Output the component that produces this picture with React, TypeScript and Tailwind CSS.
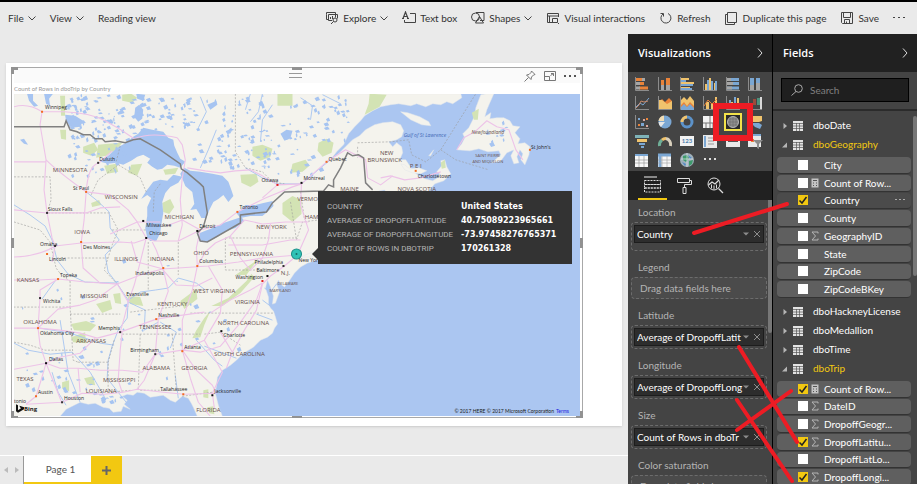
import { useState } from "react";
import type { ReactNode } from "react";

//#region types
type Field = { name: string; icon?: "calc" | "sum"; checked?: boolean; hovered?: boolean };
type Table = { name: string; open?: boolean; fields?: Field[] };
type Well = { label: string; value?: string; tall?: boolean };
type Label = [number, number, string];
//#endregion

//#region constants
const TABLES: Table[] = [
  { name: "dboDate" },
  {
    name: "dboGeography",
    open: true,
    fields: [
      { name: "City" },
      { name: "Count of Row...", icon: "calc" },
      { name: "Country", checked: true, hovered: true },
      { name: "County" },
      { name: "GeographyID", icon: "sum" },
      { name: "State" },
      { name: "ZipCode" },
      { name: "ZipCodeBKey" },
    ],
  },
  { name: "dboHackneyLicense" },
  { name: "dboMedallion" },
  { name: "dboTime" },
  {
    name: "dboTrip",
    open: true,
    fields: [
      { name: "Count of Row...", icon: "calc", checked: true },
      { name: "DateID", icon: "sum" },
      { name: "DropoffGeogr...", icon: "sum" },
      { name: "DropoffLatitu...", icon: "sum", checked: true },
      { name: "DropoffLatLo..." },
      { name: "DropoffLongi...", icon: "sum", checked: true },
    ],
  },
];

const WELLS: Well[] = [
  { label: "Location", value: "Country", tall: true },
  { label: "Legend" },
  { label: "Latitude", value: "Average of DropoffLatit" },
  { label: "Longitude", value: "Average of DropoffLong" },
  { label: "Size", value: "Count of Rows in dboTr" },
  { label: "Color saturation" },
];

const TOOLTIP = [
  ["COUNTRY", "United States"],
  ["AVERAGE OF DROPOFFLATITUDE", "40.75089223965661"],
  ["AVERAGE OF DROPOFFLONGITUDE", "-73.97458276765371"],
  ["COUNT OF ROWS IN DBOTRIP", "170261328"],
];
//#endregion

//#region map data
const LAND = [
  // mainland
  "M14 94 H460 L461 98 452 104 446 102 440 105 432 104 425 107 416 104 410 106 398 104 390 105 380 107 372 111 364 116 360 121 354 127 348 134 343 145 336 152 330 160 338 154 345 147 352 140 359 136 365 130 374 125 382 123 392 122 400 125 403 131 401 137 396 140 388 142 392 147 396 143 401 147 402 153 399 160 405 160 409 166 412 171 418 176 424 179 432 181 437 178 439 174 436 172 441 166 440 161 444 160 446 167 450 174 443 181 434 184 428 191 420 198 404 216 397 214 399 200 389 198 384 190 372 192 365 205 350 212 340 222 332 232 335 243 322 254 317 260 307 263 300 267 294 273 290 279 284 287 280 284 278 280 276 284 279 292 275 303 272 304 273 296 270 287 267 280 265 288 268 297 268 304 270 308 273 311 275 317 277 324 274 328 272 333 267 337 260 340 253 347 243 353 236 360 230 365 222 370 217 377 216 386 215 393 218 405 222 416 H197 L193 407 191 403 188 398 182 396 175 402 170 400 163 395 150 397 144 393 137 392 133 395 127 394 122 396 127 400 124 404 130 409 123 406 121 411 113 412 109 408 103 407 95 403 88 404 80 402 72 406 66 409 60 416 H14 Z",
  // Newfoundland
  "M480 95 L486 94 493 94 489 103 486 110 484 117 490 113 489 119 496 118 503 118 509 121 512 126 519 127 514 133 519 139 517 144 524 143 529 147 528 155 524 165 520 160 522 154 519 150 516 157 518 163 513 164 510 156 513 150 506 153 500 161 491 163 500 155 498 151 487 152 478 149 469 151 456 150 461 144 464 138 462 134 468 128 474 116 475 108 Z",
  // Anticosti, PEI
  "M400 112 L407 113 419 117 428 122 430 126 421 125 410 120 Z",
  "M400 164 L404 165 409 169 418 168 426 171 420 174 412 173 404 170 Z",
  "M428 156 L433 150 430 156 Z",
  // Long Island
  "M300 257 L312 252 318 252 310 257 Z",
];

const LAKES = [
  "M100 162 L108 156 117 148 126 143 133 137 138 134 143 128 152 130 163 132 168 138 173 140 174 146 177 153 180 159 185 162 180 168 174 166 167 165 162 169 157 170 152 167 147 163 150 159 143 155 137 157 131 161 123 165 116 163 108 164 Z",
  "M153 182 L160 180 167 181 173 175 182 177 178 183 170 187 165 193 162 202 163 213 161 225 160 233 156 241 150 241 147 238 145 228 147 216 147 207 151 198 147 195 141 199 146 191 Z",
  "M180 174 L184 168 190 171 200 172 212 174 222 176 228 182 231 190 233 196 228 202 223 195 218 199 213 202 209 210 206 218 201 218 199 214 196 209 190 210 194 204 192 192 185 186 Z",
  "M197 234 L207 230 215 227 223 223 232 220 241 217 244 221 235 228 226 231 217 237 207 242 199 241 Z",
  "M236 213 L241 209 245 205 255 205 263 203 272 201 273 206 268 211 262 216 250 216 240 218 Z",
  "M65 115 L75 116 83 121 80 127 72 128 66 122 Z",
  "M27 94 L33 94 33 101 38 106 34 107 29 101 Z",
  "M44 94 L53 94 49 99 50 106 46 104 Z",
  "M135 108 L139 105 143 110 142 119 138 122 134 117 Z",
  "M136 94 L145 95 143 101 137 99 Z",
  "M20 140 L24 139 28 145 24 144 Z",
  "M280 134 L286 130 292 131 290 138 284 141 Z",
  "M207 105 L216 101 217 105 210 110 Z",
];

const PARKS = [
  "M60 96 H65 V116 H61 Z",
  "M277 94 H292 V106 H277 Z",
  "M369 94 L386 95 379 107 364 115 368 104 Z",
  "M252 147 L262 145 272 149 270 157 260 161 252 156 Z",
  "M318 143 L326 139 333 143 331 153 322 157 317 151 Z",
  "M292 164 L305 160 309 166 302 172 290 173 Z",
  "M240 175 L256 174 258 182 250 187 241 183 Z",
  "M282 203 L292 196 301 200 301 214 292 222 282 214 Z",
  "M60 130 L66 130 66 140 61 139 Z",
  "M98 145 L108 144 122 143 117 149 106 156 96 158 Z",
  "M83 147 L94 143 98 150 91 156 83 153 Z",
  "M131 165 L142 164 137 176 128 173 Z",
  "M104 166 L116 164 118 172 107 174 Z",
  "M163 170 L178 168 175 174 165 175 Z",
  "M162 203 L170 199 174 207 169 214 163 212 Z",
  "M91 203 L99 200 101 205 92 207 Z",
  "M122 95 L131 94 137 98 132 103 122 101 Z",
  "M71 324 L86 321 96 325 90 331 74 330 Z",
  "M71 337 L85 332 86 343 73 342 Z",
  "M96 304 L110 300 112 309 102 313 Z",
  "M113 294 L120 293 121 304 115 303 Z",
  "M127 296 L140 297 143 306 130 304 Z",
  "M180 301 L196 289 197 299 184 309 Z",
  "M196 330 L204 318 210 311 204 325 200 337 192 338 Z",
  "M211 306 L228 298 246 281 251 274 254 277 240 293 222 306 Z",
  "M235 275 L254 262 260 256 246 275 Z",
  "M203 390 L208 389 208 398 203 397 Z",
  "M62 382 L69 380 69 391 62 388 Z",
  "M84 378 L93 376 95 385 87 384 Z",
  "M471 113 L478 109 477 120 473 120 Z",
  "M440 163 L444 160 445 168 441 169 Z",
  "M207 407 L213 406 214 414 209 413 Z",
];

const ROADS = [
  "M14 107 Q28 103 42 112 H64 Q90 113 105 121 T134 139 Q150 132 177 138",
  "M42 112 L40 125 46 160 44 190 47 213 52 238 55 246 52 262",
  "M46 160 Q58 172 86 192 L110 195 128 210 137 222 146 238 154 241 178 241 200 230",
  "M14 162 H46",
  "M14 210 L47 213 H86 L100 208 120 207",
  "M86 192 L84 220 81 243 83 268 100 283 117 284",
  "M86 192 Q88 165 99 163 L112 151",
  "M14 257 Q40 256 55 246 L81 243 120 242 134 243 146 239",
  "M14 280 L39 280 58 279 85 282 117 284 140 275 162 269 178 268 208 266 238 262 262 258 297 255",
  "M40 297 L38 328 40 345 46 363 41 380 36 396 26 404",
  "M58 279 L40 290 40 297",
  "M14 328 L38 328 60 330 80 333 97 338 120 332 156 319 175 316 204 312",
  "M38 328 L58 309 80 305 95 300 117 284",
  "M46 363 L60 368 78 368 100 370 122 370 142 372 155 354 182 350",
  "M14 369 L46 363 56 388 62 403",
  "M26 404 L62 402 82 393 104 394 123 392 137 389 163 392 184 394 216 393",
  "M46 363 L60 357 80 353 95 338",
  "M78 368 L80 392",
  "M122 332 L120 350 118 380 122 392",
  "M117 284 L128 302 124 318 120 332",
  "M146 238 L140 262 134 285 128 302",
  "M163 269 L156 250 152 242",
  "M163 269 L168 291 158 319 155 354 144 380 137 389",
  "M162 269 L176 285 196 286 212 278",
  "M197 266 L192 290 182 320 182 350 190 378 198 402 210 416",
  "M178 241 L182 225 180 200 182 178 185 160 182 145 177 138",
  "M208 266 L222 290 220 313 204 340 182 350",
  "M182 350 L200 352 220 346 238 325 256 300 262 283",
  "M204 340 L222 372 212 393 214 408",
  "M220 332 L232 352 226 368",
  "M182 350 L196 370 212 385 216 393",
  "M200 230 L220 225 237 212 265 198 292 187 301 184 326 162 345 150 365 160 367 178 380 185 392 176",
  "M277 185 L301 184 M277 185 L262 176 250 170 235 171 220 173 205 171 187 168",
  "M277 185 L262 198 M301 184 L300 205 308 230 297 255",
  "M244 220 L262 224 285 222 308 222",
  "M244 220 L230 236 215 243 205 252 197 266",
  "M262 258 L268 240 270 224 M262 258 L250 270 240 258 230 236",
  "M262 283 L250 290 230 300 210 313",
  "M297 255 L284 266 270 276 262 284 256 310 244 330 232 352",
  "M200 230 L182 220 166 226 M200 230 L196 248 197 266",
  "M228 245 H262 L290 240 300 240",
  "M456 150 L463 138 474 132 486 121 496 127 508 130 515 150 522 160",
  "M380 178 L390 176 404 180 420 178 440 172",
  "M137 222 L110 234 M137 222 H160 M131 241 L137 262 163 269",
];

const STATE_LINES = [
  "M235 94 V152 L245 168 262 172 272 182 284 184",
  "M14 177 H50 L51 200 47 213 H109",
  "M91 195 L98 180 118 165 140 178 146 192",
  "M14 222 L40 230 50 242 56 268 62 276 70 281",
  "M110 215 L118 230 112 245 104 270 118 285",
  "M57 258 H108 M70 281 V307 H14 M70 307 L73 360 78 362 M70 314 H120",
  "M14 342 L30 345 45 350 72 350",
  "M78 362 H108 V392 L132 390",
  "M122 334 H200 M130 312 L180 306",
  "M114 340 L108 362 M140 334 L138 390 M172 334 L176 390 M140 390 H172",
  "M148 242 V290 M178 242 V275 M112 230 H147",
  "M190 313 H274 M204 334 L220 332 240 345",
  "M225 238 H296 M225 238 V270 H262 M182 396 L212 392",
  "M290 202 L296 240 302 222 318 220 M300 192 L304 220",
  "M357 147 V158 M357 143 L390 142 408 140 411 155 425 162 440 150 475 94",
  "M440 150 L455 160 488 170",
  "M160 184 L154 192 153 212 M120 146 L116 162",
];

const RIVERS = [
  "M86 192 L96 200 109 212 110 228 119 240 105 255 108 272 118 285 128 300 127 318 118 330 112 346 108 360 107 378 118 392 126 402",
  "M14 205 L30 215 45 226 52 240 57 260 68 274 85 282 117 283",
  "M128 300 L140 292 155 290 168 288 178 278 196 283 205 290",
  "M14 343 L28 350 50 354 72 352 90 372 104 396",
  "M42 299 L55 281 M40 328 L70 333 100 343 114 345",
  "M128 302 L145 310 144 330 158 322",
  "M245 168 L262 178 277 184 301 184 320 168 330 160",
  "M250 94 L245 110 M262 94 L258 112 250 122 M272 105 L262 120 260 142",
  "M300 98 L312 106 310 120 M322 95 L340 104",
  "M200 97 L206 112 198 128 M216 130 L208 150 200 168",
  "M60 320 L68 372 80 402 M52 372 L58 392 66 405",
  "M160 322 L176 332 170 348 M175 375 L178 398",
  "M276 284 L270 292 264 288 M262 300 L270 306 M256 314 L272 320",
  "M196 340 L214 360 222 366 M204 346 L236 358",
];

const STATES: Label[] = [
  [70, 172, "MINNESOTA"], [121, 199, "WISCONSIN"], [179, 219, "MICHIGAN"], [82, 234, "IOWA"],
  [126, 261, "ILLINOIS"], [162, 261, "INDIANA"], [201, 255, "OHIO"], [28, 282, "KANSAS"],
  [94, 298, "MISSOURI"], [172, 306, "KENTUCKY"], [40, 324, "OKLAHOMA"], [155, 329, "TENNESSEE"],
  [91, 343, "ARKANSAS"], [25, 381, "TEXAS"], [119, 382, "MISSISSIPPI"], [156, 370, "ALABAMA"],
  [194, 370, "GEORGIA"], [101, 393, "LOUISIANA"], [214, 293, "WEST VIRGINIA"], [247, 304, "VIRGINIA"],
  [243, 325, "NORTH CAROLINA"], [239, 356, "SOUTH CAROLINA"], [208, 412, "FLORIDA"],
  [251, 256, "PENNSYLVANIA"], [271, 229, "NEW YORK"], [307, 201, "VERMO"], [311, 219, "HAM"],
  [349, 191, "MAINE"], [386, 155, "NEW"], [384, 162, "BRUNSWICK"], [415, 168, "P E I"],
  [416, 191, "NOVA SCOTIA"], [285, 275, "N.J."],
];

const CITIES: Label[] = [
  [45, 109, "Winnipeg"], [99, 161, "Duluth"], [73, 190, "St Paul"], [48, 211, "Sioux Falls"],
  [146, 227, "Milwaukee"], [149, 235, "Chicago"], [40, 246, "Omaha"], [83, 249, "Des Moines"],
  [49, 261, "Lincoln"], [60, 277, "Topeka"], [43, 303, "Wichita"], [135, 275, "Indianapolis"],
  [126, 296, "Evansville"], [158, 317, "Nashville"], [98, 330, "Memphis"], [40, 335, "Oklahoma City"],
  [49, 361, "Dallas"], [130, 352, "Birmingham"], [184, 349, "Atlanta"], [38, 394, "Austin"],
  [64, 400, "Houston"], [14, 403, "tonio"], [160, 391, "Tallahassee"], [214, 393, "Jacksonville"],
  [223, 337, "Charlotte"], [235, 279, "Washington"], [256, 272, "Baltimore"], [254, 264, "Philadelphia"],
  [199, 263, "Columbus"], [199, 228, "Detroit"], [239, 209, "Toronto"], [261, 182, "Ottawa"],
  [303, 180, "Montreal"], [328, 161, "Quebec"], [417, 178, "Charlottetown"], [530, 149, "St John's"],
  [298, 262, "New Yor"],
];

const DOTS: [number, number, string][] = [
  [42, 112, "#f26b21"], [98, 163, "#333"], [86, 192, "#f26b21"], [47, 213, "#333"], [143, 221, "#111"],
  [146, 238, "#111"], [81, 242, "#f26b21"], [47, 254, "#f26b21"], [55, 246, "#333"], [58, 279, "#f26b21"],
  [40, 298, "#333"], [163, 268, "#f26b21"], [156, 319, "#f26b21"], [120, 332, "#333"], [38, 328, "#f26b21"],
  [46, 363, "#111"], [155, 354, "#333"], [182, 351, "#f26b21"], [36, 396, "#f26b21"], [62, 402, "#333"],
  [183, 394, "#f26b21"], [212, 395, "#111"], [221, 331, "#111"], [262, 281, "#e01b1b"], [267, 276, "#111"],
  [283, 266, "#333"], [197, 266, "#f26b21"], [197, 231, "#111"], [237, 212, "#f26b21"], [277, 185, "#e01b1b"],
  [301, 183, "#111"], [326, 162, "#f26b21"], [415, 171, "#f26b21"], [529, 150, "#f26b21"],
];

// [x, y, width, height, count] of zones that are dotted with small lakes
const LAKE_ZONES = [
  [66, 95, 66, 45, 90], [134, 96, 60, 34, 50], [195, 96, 70, 66, 50], [240, 96, 110, 45, 60],
  [250, 145, 70, 36, 26], [60, 142, 70, 34, 30], [188, 150, 50, 18, 14], [18, 260, 180, 130, 30],
  [20, 350, 80, 45, 26], [180, 300, 60, 60, 8], [470, 122, 36, 24, 10], [95, 394, 28, 8, 10],
];

function scatter() {
  let seed = 17;
  const next = () => {
    seed = (seed * 16807) % 2147483647;
    return seed / 2147483647;
  };
  return LAKE_ZONES.flatMap(([x, y, w, h, n]) =>
    Array.from({ length: n }, () => {
      const cx = x + next() * w;
      const cy = y + next() * h;
      const a = 1 + next() * 3;
      const b = 1 + next() * 3;
      return `M${cx.toFixed(1)} ${cy.toFixed(1)} l${a.toFixed(1)} ${(-b / 2).toFixed(1)} ${(a / 2).toFixed(1)} ${b.toFixed(1)} ${(-a).toFixed(1)} ${(b / 3).toFixed(1)}z`;
    })
  ).join(" ");
}
const SMALL_LAKES = scatter();
//#endregion

//#region icons
function Chevron() {
  return (
    <svg className="w-2 h-2 shrink-0" viewBox="0 0 8 8" fill="none" stroke="#444">
      <path d="M0.500 2.500 L4 6 L7.500 2.500" />
    </svg>
  );
}

function ToolIcon({ children }: { children: ReactNode }) {
  return (
    <svg className="w-[14px] h-[14px] shrink-0" viewBox="0 0 14 14" fill="none" stroke="#444">
      {children}
    </svg>
  );
}

const O = "#e8833a";
const Y = "#f0c36d";
const B = "#7ba7d3";
const G = "#a6a6a6";
const AXIS = <path d="M0.500 0 V13.500 H14" stroke="#8c8c8c" fill="none" />;

const VISUALS: { name: string; art: ReactNode }[] = [
  { name: "Stacked bar chart", art: <>{AXIS}<path d="M1 1h6v3H1zM1 5h8v3H1zM4 9.500h9v3H4z" fill={O} /><path d="M7 1h3v3H7zM1 5h4v3H1zM1 9.500h4v3H1z" fill={G} /></> },
  { name: "Stacked column chart", art: <>{AXIS}<path d="M3 3h3v10H3zM8 1h4v7H8z" fill={O} /><path d="M3 8h3v5H3zM8 8h4v5H8z" fill={G} /></> },
  { name: "Clustered bar chart", art: <>{AXIS}<path d="M1 1h8v2H1zM1 5h13v2H1zM1 10h9v1H1z" fill={Y} /><path d="M1 3h5v2H1zM1 7h12v2H1zM1 11h11v2H1z" fill={B} /></> },
  { name: "Clustered column chart", art: <>{AXIS}<path d="M2 7h2v6H2zM6 1h2v12H6zM11 6h1v7h-1z" fill={Y} /><path d="M4 3h2v10H4zM8 4h2v9H8zM12 4h2v9h-2z" fill={B} /></> },
  { name: "100% stacked bar chart", art: <>{AXIS}<path d="M1 1h12v3H1zM1 5h12v3H1zM1 9.500h12v3H1z" fill={B} /><path d="M1 1h4v3H1zM1 5h6v3H1zM1 9.500h5v3H1z" fill={G} /></> },
  { name: "100% stacked column chart", art: <>{AXIS}<path d="M2 1h4v12H2zM8 1h4v12H8z" fill={B} /><path d="M2 8h4v5H2zM8 6h4v7H8z" fill={G} /></> },
  { name: "Line chart", art: <>{AXIS}<path d="M1 11 L5 7 8 9 14 2" stroke={B} fill="none" /><path d="M1 12 L4 9 6 5 9 6 13 5" stroke="#c98a6a" fill="none" /></> },
  { name: "Area chart", art: <>{AXIS}<path d="M1 6 L4 3 7 6 11 2 14 5 V13 H1z" fill={O} /><path d="M1 4 L4 4 9 8 14 5 V13 H1z" fill={Y} /></> },
  { name: "Stacked area chart", art: <>{AXIS}<path d="M1 4 L4 1 7 4 10 0 14 5 V13 H1z" fill={Y} /><path d="M1 9 L4 6 7 10 10 6 14 10 V13 H1z" fill={O} /><path d="M1 11 L4 8 7 11 10 8 14 12 V14 H1z" fill={B} /></> },
  { name: "Line and stacked column chart", art: <>{AXIS}<path d="M3 6h3v7H3zM8 8h2v5H8zM12 1h2v12h-2z" fill={Y} /><path d="M1 10 L5 4 9 8 14 3" stroke={O} fill="none" /></> },
  { name: "Line and clustered column chart", art: <>{AXIS}<path d="M3 4h2v9H3zM8 1h2v12H8z" fill={B} /><path d="M5 6h2v7H5zM11 2h2v11h-2z" fill={Y} /></> },
  { name: "Waterfall chart", art: <>{AXIS}<path d="M3 8h2v5H3zM12 1h2v12h-2z" fill="#d9d9d9" /><path d="M5 3h3v6H5z" fill="#9b4a3c" /><path d="M9 2h3v7H9z" fill="#4d8f7a" /></> },
  { name: "Scatter chart", art: <>{AXIS}<path d="M3 9h2v2H3zM11 3h2v2h-2z" fill={O} /><path d="M6 8h3v3H6zM3 3h2v2H3z" fill={B} /><path d="M8 4h2v2H8zM11 10h2v2h-2z" fill="#d9a79c" /></> },
  { name: "Pie chart", art: <><circle cx="7" cy="7" r="6.500" fill={B} /><path d="M6 6 V0.500 A6.500 6.500 0 0 0 0.500 6z" fill="#f0dcb4" /><path d="M7 7 H0.500 A6.500 6.500 0 0 0 3 12z" fill="#e6e6e6" /></> },
  { name: "Donut chart", art: <><circle cx="7" cy="7" r="5" fill="none" stroke="#5c92c9" strokeWidth="3" /><path d="M7 2 A5 5 0 0 0 2 7" fill="none" stroke={Y} strokeWidth="3" /></> },
  { name: "Treemap", art: <><path d="M0 1h14v12H0z" fill="#f2f2f2" /><path d="M7 1v12M0 8h14M10 8v5M3 8v5" stroke="#777" /></> },
  { name: "Map", art: <><path d="M-1 -1h16v16H-1z" fill="#2a2a2a" stroke="#f2e24a" strokeWidth="2" /><circle cx="7" cy="7" r="5.500" fill="#8e8e8e" stroke="#b5b5b5" /><path d="M7 2v10M2 7h10M3 4h8M3 10h8M4 3v8M10 3v8" stroke="#666" strokeWidth="0.500" /></> },
  { name: "Filled map", art: <><path d="M4 1h10v5l-3 1H5L3 4z" fill={Y} /><path d="M0 3h4l1 3H1zM3 8h8l3 2-2 4-5-2z" fill={B} /><path d="M1 8h4" stroke="#e6e6e6" /></> },
  { name: "Funnel", art: <><path d="M0 1h14v3H0z" fill="#7fb3b8" /><path d="M2 5h10v3H2z" fill={Y} /><path d="M4 9h6v2H4z" fill={B} /><path d="M6 12h3v2H6z" fill={B} /></> },
  { name: "Gauge", art: <><path d="M1.500 12 A5.500 6 0 0 1 4 6" fill="none" stroke="#6fae97" strokeWidth="3" /><path d="M4 6 A5.500 5.500 0 0 1 8 4.500" fill="none" stroke={Y} strokeWidth="3" /><path d="M8 4.500 A5.500 6 0 0 1 12.500 12" fill="none" stroke="#d9d0bd" strokeWidth="3" /></> },
  { name: "Card", art: <><path d="M0 2h14v10H0z" fill="#f2f2f2" /><text x="7" y="9" textAnchor="middle" fontSize="6" fontWeight="700" fill="#4f7fae">123</text></> },
  { name: "Multi-row card", art: <><path d="M0 1h14v13H0z" fill="#e9e9e9" /><path d="M2 2v11" stroke={B} strokeWidth="2" /><path d="M5 4h8M5 7h6M5 10h6" stroke="#999" /></> },
  { name: "KPI", art: <><path d="M0 1h14v12H0z" fill="#e9e9e9" /><path d="M2 7h10" stroke="#555" strokeWidth="2" /></> },
  { name: "Slicer", art: <><path d="M0 0h13v13H0z" fill="#e9e9e9" /><path d="M0 1h13" stroke={B} strokeWidth="2" /><path d="M3 5h3v3H3z" fill={O} /><path d="M5 6h10l-4 4v5l-2-1v-4z" fill="#8c8c8c" /></> },
  { name: "Table", art: <><path d="M0 1h13v13H0z" fill="#f7f7f7" /><path d="M0 2h13" stroke={B} strokeWidth="2" /><path d="M4 3v11M9 3v11M0 7h13M0 10h13" stroke="#999" strokeWidth="0.700" /></> },
  { name: "Matrix", art: <><path d="M0 1h13v13H0z" fill="#f7f7f7" /><path d="M0 2h13M2 3v11" stroke={B} strokeWidth="3" /><path d="M4 3v11M9 3v11M0 7h13M0 10h13" stroke="#aaa" strokeWidth="0.700" /></> },
  { name: "ArcGIS map", art: <><circle cx="7" cy="7" r="7" fill="#9fb0ba" /><path d="M3 3l4-1 2 3-3 4-3-2zM9 8l4-1-1 4-3 2z" fill="#3f9b6c" /><path d="M8 2l4 3-2 1zM2 9l4 2-1 2z" fill="#4f88c7" /><path d="M1 6h12M7 0v14" stroke="#dfe6ea" strokeWidth="0.700" /></> },
  { name: "More visuals", art: <path d="M1 5h2v2H1zM6 5h2v2H6zM11 5h2v2h-2z" fill="#ddd" /> },
];

function GridIcon() {
  return (
    <svg className="w-[10px] h-[10px] shrink-0" viewBox="0 0 10 10">
      <path d="M0 0h10v10H0z" fill="#e3e3e3" />
      <path d="M3.500 2v8M6.500 2v8M0 2.500h10M0 5h10M0 7.500h10" stroke="#555" strokeWidth="0.700" />
    </svg>
  );
}

function FieldIcon({ kind }: { kind?: "calc" | "sum" }) {
  return (
    <svg className="w-2 h-[10px] shrink-0" viewBox="0 0 8 10" fill="none">
      {kind === "calc" && (
        <>
          <path d="M0.500 0.500h7v9h-7z" fill="#c4c4c4" />
          <path d="M2 2.500h4M2 5h1M5 5h1M2 7.500h1M5 7.500h1" stroke="#555" />
        </>
      )}
      {kind === "sum" && <path d="M7 2.500 V1 H1 L4.500 5 L1 9 H7 V7.500" stroke="#b5b5b5" />}
    </svg>
  );
}

function PaneChevron() {
  return (
    <svg className="w-[6px] h-[10px]" viewBox="0 0 6 10" fill="none" stroke="#ddd">
      <path d="M1 0.500 L5 5 L1 9.500" />
    </svg>
  );
}
//#endregion

//#region toolbar
function ToolButton({ icon, label, menu }: { icon?: ReactNode; label: string; menu?: boolean }) {
  return (
    <button type="button" className="flex items-center gap-1 whitespace-nowrap">
      {icon && <ToolIcon>{icon}</ToolIcon>}
      <span>{label}</span>
      {menu && <Chevron />}
    </button>
  );
}

function Toolbar() {
  return (
    <header className="flex h-[34px] shrink-0 items-center border-t-2 border-black bg-[#eaeaea] pl-2 pr-3 text-[10px] text-[#333]">
      <nav className="flex items-center gap-[14px]">
        <ToolButton label="File" menu />
        <ToolButton label="View" menu />
        <ToolButton label="Reading view" />
      </nav>
      <div className="ml-auto flex items-center gap-[14px]">
        <ToolButton label="Explore" menu icon={<><path d="M1.500 3.500v-2h9v5M3 8.500H1.500v-5M3.500 3.500h9v4M3.500 3.500v6H7M5.500 8V6M7.500 8V5" /><circle cx="10" cy="9" r="2" /><path d="M8.500 10.500 L6 13" /></>} />
        <ToolButton label="Text box" icon={<><path d="M8 2.500h5.500v9h-11V9" /><path d="M1 7.500 L3.500 1 L6 7.500 M2 5.500h3M0 7.500h2M5 7.500h2" strokeWidth="1.200" /></>} />
        <ToolButton label="Shapes" menu icon={<><circle cx="4.500" cy="6" r="4" /><path d="M5 1.500h8v8H9" /><path d="M8.500 5.500 L12.500 12 H4.500z" /></>} />
        <ToolButton label="Visual interactions" icon={<><path d="M7 11.500H1.500v-9h11V6M1.500 5h11M3.500 5v6" /><path d="M6.500 7.500h5v4h-5zM12 12l1 1" /></>} />
        <ToolButton label="Refresh" icon={<><path d="M4 3 A5 5 0 1 0 9 2.500" /><path d="M1.500 2.500H4.500V5.500" /></>} />
        <ToolButton label="Duplicate this page" icon={<><path d="M3.500 1.500h9v10h-9z" /><path d="M3.500 3.500h-2v10h9v-2" /></>} />
        <ToolButton label="Save" icon={<><path d="M1.500 1.500h11v11h-10l-1-1z" /><path d="M3.500 1.500v5h7v-5M4.500 12.500v-4h5v4M6.500 10.500v2" /></>} />
        <button type="button" aria-label="More options" className="text-[#444]">
          <svg className="w-3 h-1" viewBox="0 0 12 4" fill="currentColor">
            <path d="M0 1h2v1H0zM5 1h2v1H5zM10 1h2v1h-2z" />
          </svg>
        </button>
      </div>
    </header>
  );
}
//#endregion

//#region map
function MapDrawing() {
  return (
    <svg className="h-full w-full font-['Open_Sans',sans-serif]" viewBox="14 94 565 322" preserveAspectRatio="xMidYMid slice" fill="none">
      <path d="M14 94h565v322H14z" fill="#abc6f1" />
      {LAND.map((d) => <path key={d} d={d} fill="#f4f3ed" stroke="#e2e6ea" strokeWidth="0.500" />)}
      {PARKS.map((d) => <path key={d} d={d} fill="#d3e3b4" />)}
      {LAKES.map((d) => <path key={d} d={d} fill="#a6c4f1" />)}
      <path d={SMALL_LAKES} fill="#a6c4f1" />
      <g stroke="#a6c4f1" strokeWidth="0.900">
        {RIVERS.map((d) => <path key={d} d={d} />)}
      </g>
      <g stroke="#9a9a9a" strokeWidth="0.600" strokeDasharray="2 1.500">
        {STATE_LINES.map((d) => <path key={d} d={d} />)}
      </g>
      <g stroke="#edc3e8" strokeWidth="1.100" strokeLinejoin="round">
        {ROADS.map((d) => <path key={d} d={d} />)}
      </g>
      <path
        d="M14 127H64L66 121 70 130 77 132 83 135 90 135 95 139 102 139 105 142 115 141 125 143 133 140 140 139 160 150 180 164 181 169 187 173 200 184 203 187 207 213 203 227 197 233 200 241 207 242 240 223 240 215 266 212 272 203 284 192 323 191 328 185 333 187 333 180 340 168 347 153 352 156 358 155 363 158 365 183 372 190"
        stroke="#808080"
        strokeWidth="1.500"
      />
      {DOTS.map(([x, y, fill]) => <rect key={`${x}-${y}`} x={x - 1} y={y - 1} width="2" height="2" fill={fill} />)}
      <g fontSize="6" fill="#66504c" textAnchor="middle">
        {STATES.map(([x, y, name]) => <text key={name} x={x} y={y}>{name}</text>)}
      </g>
      <g fontSize="5" fill="#1d1d1d">
        {CITIES.map(([x, y, name]) => <text key={name} x={x} y={y}>{name}</text>)}
      </g>
      <g fontSize="4" fill="#66504c">
        <text x="277" y="285">DELAWARE</text>
        <text x="269" y="292">MARYLAND</text>
      </g>
      <g fill="#66504c" textAnchor="middle">
        <text x="487" y="134" fontSize="5" fontStyle="italic">Newfoundland</text>
        <text x="487" y="157" fontSize="4">SAINT PIERRE</text>
        <text x="487" y="163" fontSize="4">AND MIQUELON</text>
      </g>
      <text x="403" y="137" fontSize="5" fontStyle="italic" fill="#3f66b5">Gulf of St Lawrence</text>
      <circle cx="296" cy="254" r="5" fill="#2fc2b6" stroke="#1b8f87" />
      <circle cx="296" cy="254" r="1" fill="#146b66" />
      <path d="M16 404 L18 405 V410 L21 408 20 407 19.500 405.500 24 407 V409 L18 412.500 16 411z" fill="#111" />
      <text x="24" y="411" fontSize="6" fontWeight="700" fill="#222">Bing</text>
      <g className="font-['Lato',sans-serif]" fontSize="5">
        <text x="553" y="413" textAnchor="end" fill="#222">© 2017 HERE © 2017 Microsoft Corporation</text>
        <a href="#terms"><text x="555" y="413" fill="#1b1be0">Terms</text></a>
      </g>
    </svg>
  );
}

function MapTooltip() {
  return (
    <div className="absolute left-[304px] top-[97px] w-[254px] bg-[#333] px-[9px] pb-2 pt-[9px]">
      <div className="absolute -left-[6px] top-[57px] border-y-[6px] border-r-[6px] border-y-transparent border-r-[#333]" />
      <table className="w-full text-left text-[8px] leading-[14px]">
        <tbody>
          {TOOLTIP.map(([name, value]) => (
            <tr key={name}>
              <th scope="row" className="whitespace-nowrap p-0 font-['Roboto',sans-serif] font-normal text-[#b3b3b3]">{name}</th>
              <td className="w-[102px] p-0 font-['DejaVu_Sans',sans-serif] font-bold text-white">{value}</td>
            </tr>
          ))}
        </tbody>
      </table>
    </div>
  );
}

function MapVisual() {
  const corner = "absolute size-[7px] border-[#929292]";
  const edge = "absolute bg-[#929292]";

  return (
    <section className="relative flex h-full min-h-0 flex-col border border-[#a8a8a8] bg-white px-0.5 pb-px">
      <i className={`${corner} -left-px -top-px border-l-[3px] border-t-[3px]`} />
      <i className={`${corner} -right-px -top-px border-r-[3px] border-t-[3px]`} />
      <i className={`${corner} -bottom-px -left-px border-b-[3px] border-l-[3px]`} />
      <i className={`${corner} -bottom-px -right-px border-b-[3px] border-r-[3px]`} />
      <i className={`${edge} -top-px left-1/2 h-[3px] w-[10px] -translate-x-1/2`} />
      <i className={`${edge} -bottom-px left-1/2 h-[3px] w-[10px] -translate-x-1/2`} />
      <i className={`${edge} -left-px top-1/2 h-[10px] w-[3px] -translate-y-1/2`} />
      <i className={`${edge} -right-px top-1/2 h-[10px] w-[3px] -translate-y-1/2`} />

      <div className="grid h-[15px] shrink-0 grid-cols-[1fr_auto_1fr] items-center bg-[#fafafa] pr-1 text-[#777]">
        <svg className="col-start-2 h-[5px] w-[13px]" viewBox="0 0 13 5" stroke="#999" aria-label="Move visual">
          <path d="M0 0.500h13M0 4.500h13" />
        </svg>
        <div className="flex items-center justify-end gap-2">
          <button type="button" aria-label="Pin visual">
            <svg className="size-3" viewBox="0 0 12 12" fill="none" stroke="currentColor">
              <path d="M7.500 1 L11 4.500 9.500 5 7.500 7 7 9.500 2.500 5 5 4.500 7 2.500zM4.500 7.500 L0.500 11.500" />
            </svg>
          </button>
          <button type="button" aria-label="Focus mode">
            <svg className="size-3" viewBox="0 0 12 12" fill="none" stroke="currentColor">
              <path d="M0.500 1.500h11v9h-11zM0.500 6.500h5v4M6.500 5.500 L9.500 3.500M7 3.500h2.500v2.500" />
            </svg>
          </button>
          <button type="button" aria-label="More options">
            <svg className="h-1 w-3" viewBox="0 0 12 4" fill="#555">
              <path d="M0 1h2v2H0zM5 1h2v2H5zM10 1h2v2h-2z" />
            </svg>
          </button>
        </div>
      </div>
      <h2 className="h-[11px] shrink-0 text-[6px] leading-[11px] text-[#999]">Count of Rows in dboTrip by Country</h2>
      <div className="relative min-h-0 flex-1">
        <div className="absolute inset-0 overflow-hidden">
          <MapDrawing />
        </div>
        <MapTooltip />
      </div>
    </section>
  );
}
//#endregion

//#region panes
function PaneHeader({ title }: { title: string }) {
  return (
    <div className="flex h-[38px] shrink-0 items-center justify-between bg-[#212121] pl-[10px] pr-[9px]">
      <h2 className="font-['Open_Sans',sans-serif] text-[11px] font-semibold text-white">{title}</h2>
      <button type="button" aria-label={`Collapse ${title}`}>
        <PaneChevron />
      </button>
    </div>
  );
}

function FieldWell({ label, value, tall }: Well) {
  return (
    <div className="flex flex-col gap-0.5">
      <h3 className="h-4 pl-[7px] text-[10px] leading-4 text-[#b4b4b4]">{label}</h3>
      {value ? (
        <div className={`rounded-sm border border-dashed border-[#6c6c6c] p-[2px] ${tall ? "h-[29px]" : "h-6"}`}>
          <div className="flex h-[18px] items-center border border-[#1d1d1d] bg-[#2d2d2d] px-[2px]">
            <span className="min-w-0 flex-1 overflow-hidden whitespace-nowrap text-[10px] text-white">{value}</span>
            <button type="button" aria-label={`${label} options`}>
              <svg className="h-1 w-[6px]" viewBox="0 0 6 4" fill="#8c8c8c"><path d="M0 0.500h6L3 3.500z" /></svg>
            </button>
            <button type="button" aria-label={`Remove ${value}`} className="ml-1">
              <svg className="size-2" viewBox="0 0 8 8" stroke="#8c8c8c"><path d="M1 1l6 6M7 1l-6 6" /></svg>
            </button>
          </div>
        </div>
      ) : (
        <div className="h-[22px] rounded-sm border border-dashed border-[#6c6c6c] bg-[#4b4b4b] pl-2 text-[10px] leading-5 text-[#b4b4b4]">
          Drag data fields here
        </div>
      )}
    </div>
  );
}

function VisualizationsPane() {
  return (
    <section className="flex w-[145px] shrink-0 flex-col border-r border-black bg-[#444]">
      <PaneHeader title="Visualizations" />
      <div className="grid h-[99px] shrink-0 auto-rows-[19px] grid-cols-6 pl-[7px] pr-px pt-[5px]">
        {VISUALS.map(({ name, art }) => (
          <button key={name} type="button" aria-label={name} className="size-[14px]">
            <svg className="size-[14px] overflow-visible" viewBox="0 0 14 14">{art}</svg>
          </button>
        ))}
      </div>
      <div className="flex h-[29px] shrink-0 bg-[#212121] pl-[10px]">
        <button type="button" aria-label="Fields" className="flex h-full w-[29px] items-center justify-center border-b-2 border-[#f2c811]">
          <svg className="h-[17px] w-[17px]" viewBox="0 0 17 17" fill="none" stroke="#ddd">
            <path d="M0 1h13" stroke="#888" strokeWidth="2" />
            <path d="M0.500 4.500h16v4h-16zM0.500 8.500h16v3.500h-16zM0.500 12h16v4h-16z" strokeDasharray="2 1" />
          </svg>
        </button>
        <button type="button" aria-label="Format" className="flex h-full w-[34px] items-center justify-center">
          <svg className="h-[17px] w-[17px]" viewBox="0 0 17 17" fill="none" stroke="#ddd">
            <path d="M1.500 1.500h12v4h-12zM13.500 3.500h2v4h-7v3M7 10.500h3v6H7z" />
          </svg>
        </button>
        <button type="button" aria-label="Analytics" className="flex h-full w-[29px] items-center justify-center">
          <svg className="h-[17px] w-[17px]" viewBox="0 0 17 17" fill="none" stroke="#ddd">
            <circle cx="7" cy="7" r="6" />
            <path d="M11.500 11.500 L16 16 M1.500 8 L5 5 8 7 12 3" strokeWidth="1.300" />
            <path d="M4.500 7.500v4M7 8.500v4M9.500 7.500v4" />
          </svg>
        </button>
      </div>
      <div className="relative min-h-0 flex-1 overflow-hidden pt-1">
        <div className="flex flex-col gap-2 pl-[3px] pr-[5px]">
          {WELLS.map((well) => <FieldWell key={well.label} {...well} />)}
        </div>
        <div className="absolute right-0 top-0 h-[133px] w-1 rounded-b bg-[#777]" />
      </div>
    </section>
  );
}

function FieldRow({ name, icon, checked = false, hovered }: Field) {
  const [isChecked, setIsChecked] = useState(checked);

  return (
    <label className={`flex items-center rounded-sm border-b border-[#333] pl-[21px] pr-[6px] ${hovered ? "bg-[#4b4b4b]" : "bg-[#5f5f5f]"}`}>
      <span className="relative size-[10px] shrink-0">
        <input
          type="checkbox"
          checked={isChecked}
          onChange={() => setIsChecked(!isChecked)}
          className="block size-[10px] appearance-none bg-white checked:bg-[#f2c811]"
        />
        {isChecked && (
          <svg className="pointer-events-none absolute inset-0" viewBox="0 0 10 10" fill="none" stroke="#222" strokeWidth="1.500">
            <path d="M1.500 5.500 L4 8 L8.500 2" />
          </svg>
        )}
      </span>
      <span className="ml-[3px] mr-[5px] flex"><FieldIcon kind={icon} /></span>
      <span className="whitespace-nowrap text-[10px] leading-none text-white">{name}</span>
      {hovered && (
        <svg className="ml-auto h-1 w-[10px]" viewBox="0 0 10 4" fill="#aaa"><path d="M0 1h2v1H0zM4 1h2v1H4zM8 1h2v1H8z" /></svg>
      )}
    </label>
  );
}

function FieldsPane() {
  return (
    <section className="flex w-36 shrink-0 flex-col bg-[#444]">
      <PaneHeader title="Fields" />
      <div className="h-[39px] shrink-0 border-b-2 border-[#2b2b2b] px-2 pt-[6px]">
        <label className="flex h-6 items-center gap-[7px] border border-black bg-[#1f1f1f] pl-[9px]">
          <svg className="size-3 shrink-0" viewBox="0 0 12 12" fill="none" stroke="#aaa">
            <circle cx="7.500" cy="4.500" r="3.800" />
            <path d="M5 7.500 L0.500 11.500" />
          </svg>
          <input type="search" placeholder="Search" aria-label="Search" className="w-full min-w-0 bg-transparent text-[10px] text-white outline-none placeholder:text-[#808080]" />
        </label>
      </div>
      <div className="relative min-h-0 flex-1 overflow-hidden pt-[5px]">
        {TABLES.map(({ name, open, fields }) => (
          <div key={name}>
            <button type="button" aria-expanded={!!open} className="flex h-[19px] w-full items-center pl-[9px] text-[10px]">
              <svg className="h-[6px] w-[6px]" viewBox="0 0 6 6" fill="#b5b5b5">
                <path d={open ? "M5 0.500V5.500H0z" : "M1.500 0L5 3 1.500 6z"} />
              </svg>
              <span className="ml-[5px] mr-[10px]"><GridIcon /></span>
              <span className={open ? "text-[#f2c811]" : "text-white"}>{name}</span>
            </button>
            {fields && (
              <div className={`mb-1 ml-1 mr-[6px] mt-[3px] grid auto-rows-fr gap-px ${fields.length > 6 ? "h-[141px]" : "h-[105px]"}`}>
                {fields.map((field) => <FieldRow key={field.name} {...field} />)}
              </div>
            )}
          </div>
        ))}
        <div className="absolute right-0 top-[5px] h-40 w-1 rounded bg-[#777]" />
      </div>
    </section>
  );
}
//#endregion

export default function App() {
  return (
    <div className="flex h-screen flex-col overflow-hidden bg-[#eaeaea] font-['Lato','Open_Sans',sans-serif]">
      <Toolbar />
      <div className="flex min-h-0 flex-1">
        <main className="flex min-w-0 flex-1 flex-col">
          <div className="min-h-0 flex-1 pb-[29px] pl-[6px] pr-[6px] pt-[29px]">
            <div className="h-full bg-white pb-2 pl-[5px] pr-[39px] pt-1 shadow">
              <MapVisual />
            </div>
          </div>

          {/* Page tabs */}
          <footer className="flex h-[29px] shrink-0 border-t border-white text-[10px]">
            <div className="flex w-6 items-center justify-between border-r border-[#999] px-1">
              <button type="button" aria-label="Previous page">
                <svg className="h-[6px] w-1" viewBox="0 0 4 6" fill="#bbb"><path d="M4 0v6L0 3z" /></svg>
              </button>
              <button type="button" aria-label="Next page">
                <svg className="h-[6px] w-1" viewBox="0 0 4 6" fill="#bbb"><path d="M0 0v6l4-3z" /></svg>
              </button>
            </div>
            <button type="button" className="w-[67px] border-b-2 border-[#f2c811] bg-white pl-[6px] text-[#555]">Page 1</button>
            <button type="button" aria-label="New page" className="flex w-[31px] items-center justify-center bg-[#f2c811]">
              <svg className="size-[9px]" viewBox="0 0 9 9" stroke="#666" strokeWidth="2"><path d="M4.500 0v9M0 4.500h9" /></svg>
            </button>
          </footer>
        </main>

        <aside className="relative flex shrink-0 overflow-hidden">
          <VisualizationsPane />
          <FieldsPane />

          {/* Red markup that ties the wells to their fields */}
          <svg className="pointer-events-none absolute left-0 top-0 h-[450px] w-[289px]" viewBox="0 0 289 450" fill="none" stroke="#ed1c24">
            <path d="M88 72h34v32H88z" strokeWidth="6" />
            <path d="M66 199L159 170M111 313L169 408M109 366L164 447M109 396L163 357" strokeWidth="4" strokeLinecap="round" />
          </svg>
        </aside>
      </div>
    </div>
  );
}
